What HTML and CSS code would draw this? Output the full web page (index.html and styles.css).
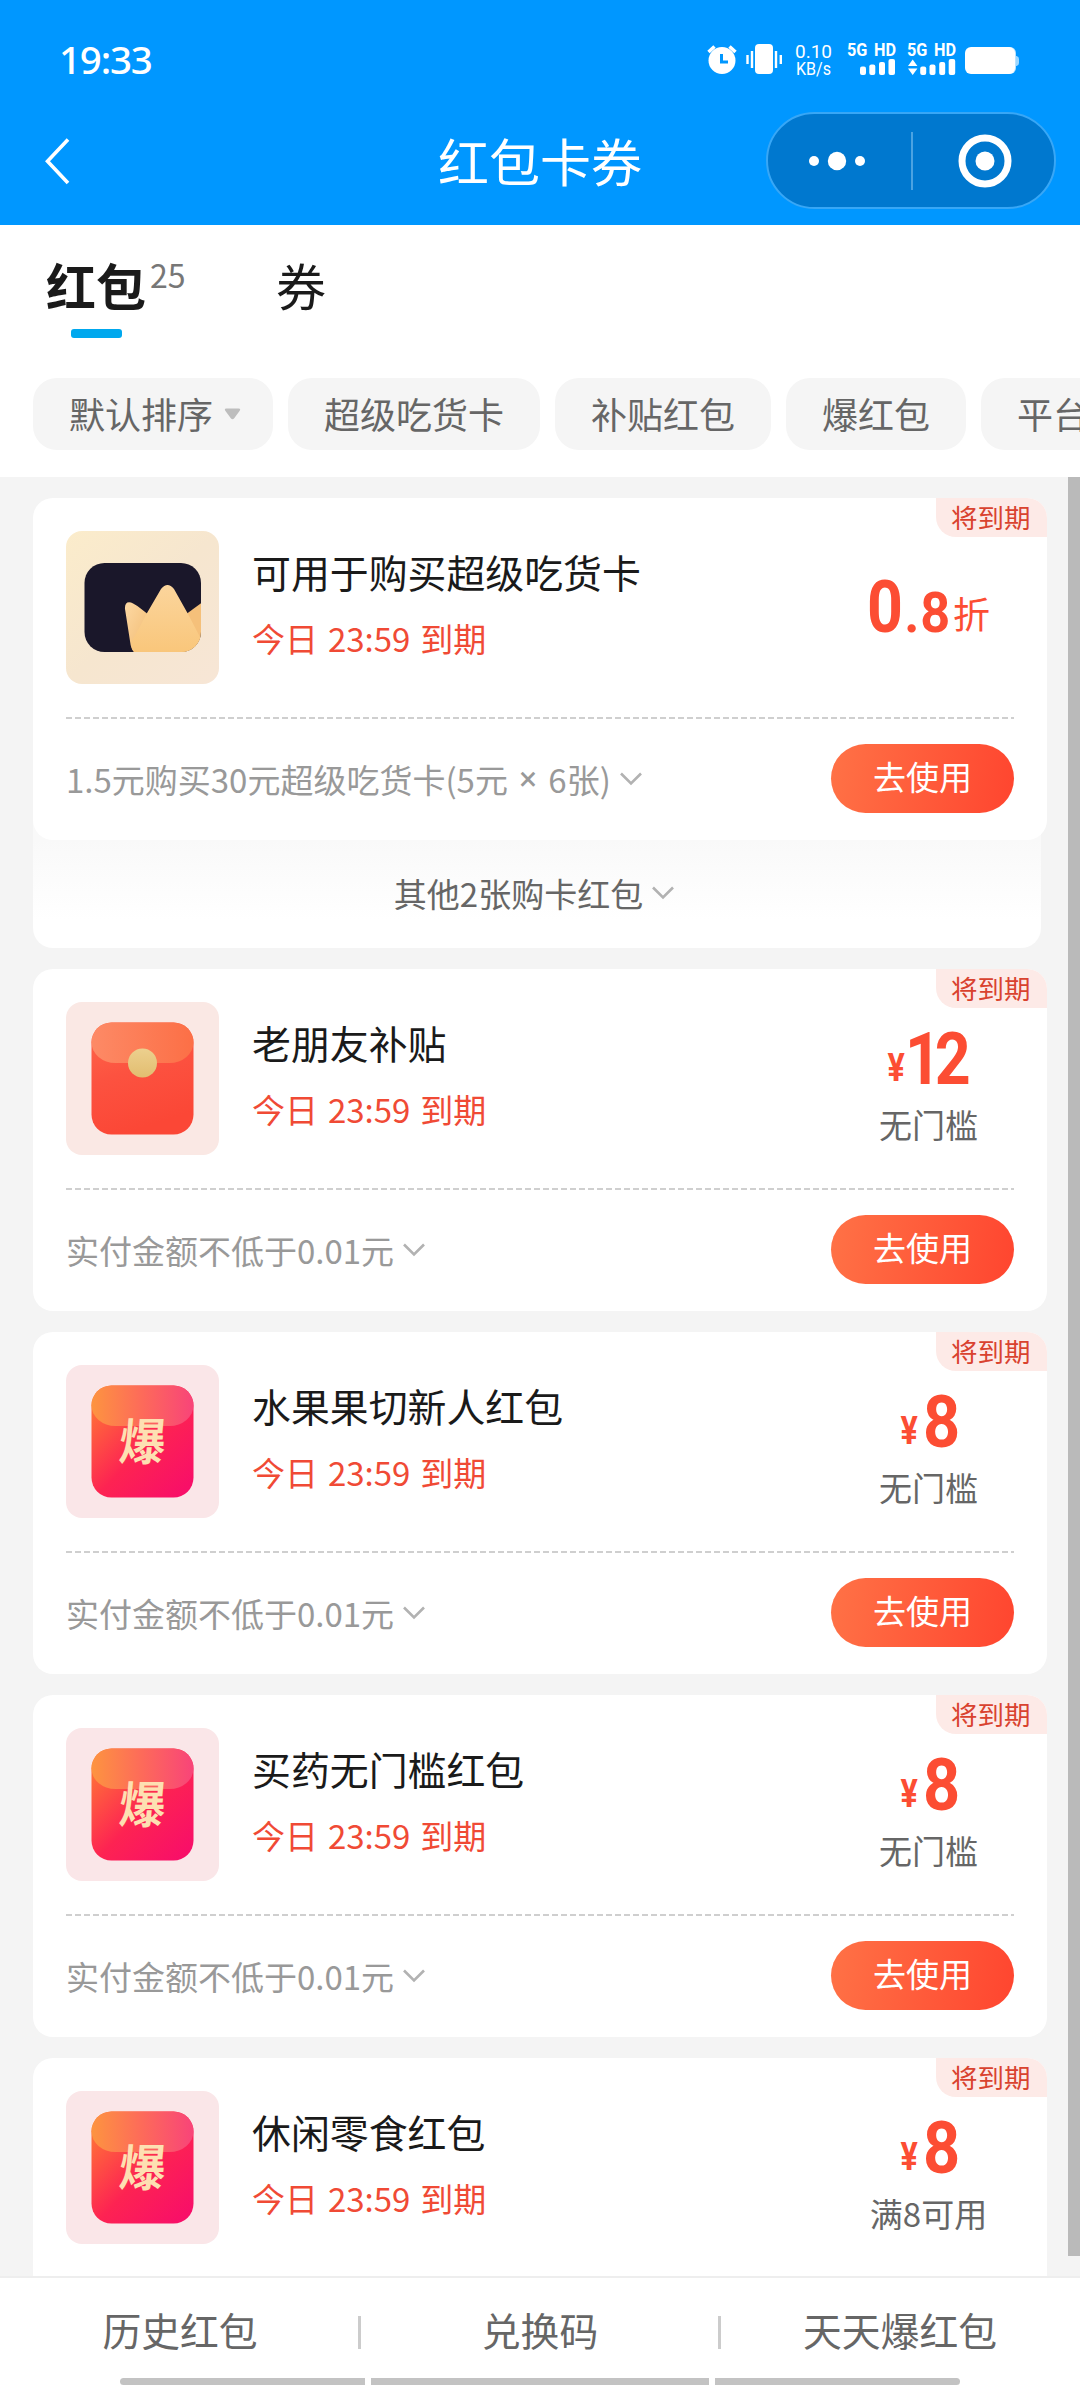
FILE: index.html
```html
<!DOCTYPE html>
<html lang="zh-CN">
<head>
<meta charset="utf-8">
<title>红包卡券</title>
<link rel="stylesheet" href="styles.css">
</head>
<body>
<svg class="defs" width="0" height="0" aria-hidden="true">
  <defs>
    <linearGradient id="cream" x1="0" y1="0" x2="1" y2="1"><stop offset="0" stop-color="#fbeccb"/><stop offset=".5" stop-color="#f6e6cf"/><stop offset="1" stop-color="#f7e6d6"/></linearGradient>
    <linearGradient id="gold" x1="0" y1="0" x2="0" y2="1"><stop offset="0" stop-color="#fbd59c"/><stop offset="1" stop-color="#f9c67a"/></linearGradient>
    <linearGradient id="goldSide" x1="0" y1="0" x2="1" y2="1"><stop offset="0" stop-color="#fdd9a4"/><stop offset="1" stop-color="#f0b66a"/></linearGradient>
    <linearGradient id="red" x1="0" y1="0" x2=".3" y2="1"><stop offset="0" stop-color="#ff6a4a"/><stop offset=".5" stop-color="#fc5240"/><stop offset="1" stop-color="#fb4736"/></linearGradient>
    <linearGradient id="flap" x1="0" y1="0" x2="1" y2="0"><stop offset="0" stop-color="#fd8a66"/><stop offset="1" stop-color="#fc6f46"/></linearGradient>
    <linearGradient id="coin" x1="0" y1="0" x2="0" y2="1"><stop offset="0" stop-color="#ecd08e"/><stop offset="1" stop-color="#e2bd70"/></linearGradient>
    <linearGradient id="hot" x1="0" y1="0.1" x2=".85" y2="1"><stop offset="0" stop-color="#ff7a35"/><stop offset=".55" stop-color="#fd2352"/><stop offset="1" stop-color="#f80f68"/></linearGradient>
    <linearGradient id="hotFlap" x1="0" y1="0" x2="1" y2="0"><stop offset="0" stop-color="#fd9440"/><stop offset=".5" stop-color="#fd6a5a"/><stop offset="1" stop-color="#f84479"/></linearGradient>
    <clipPath id="cardClip"><rect x="18.5" y="32" width="116.5" height="89" rx="20"/></clipPath>
    <symbol id="chevron" viewBox="0 0 24 14"><path d="M2 1.5 12 11.5 22 1.5" fill="none" stroke="#b2b2b2" stroke-width="2.6"/></symbol>
    <symbol id="burst" viewBox="0 0 153 153">
      <rect width="153" height="153" rx="16" fill="#fae6e8"/>
      <rect x="25.5" y="20.5" width="102" height="112" rx="20" fill="url(#hot)"/>
      <path d="M25.5 40.5a20 20 0 0 1 20-20h62a20 20 0 0 1 20 20a24 20.500 0 0 1-24 20.500h-54a24 20.500 0 0 1-24-20.500z" fill="url(#hotFlap)"/>
      <text transform="translate(58 95) skewX(-5) scale(1 1.06)" x="-6" y="0" textLength="46" lengthAdjust="spacingAndGlyphs" class="burst-char">爆</text>
    </symbol>
  </defs>
</svg>

<div class="screen">
  <header class="header">
    <div class="status">
      <span class="clock">19:33</span>
      <svg class="status-icons" width="325" height="44" viewBox="700 38 325 44" fill="#fff">
        <circle cx="723" cy="60.500" r="13.500"/>
        <path d="M709.500 52l6-5.500M736.500 52l-6-5.500" stroke="#fff" stroke-width="3.500" fill="none"/>
        <path d="M722.500 54v8h6.500" stroke="#0097ff" stroke-width="3" fill="none"/>
        <rect x="756" y="44" width="18" height="30" rx="4"/>
        <path d="M748.500 55v9M753 51v17M777 51v17M781.800 55v9" stroke="#fff" stroke-width="2.400"/>
        <g class="speed"><text x="796" y="58" textLength="37" lengthAdjust="spacingAndGlyphs">0.10</text><text x="797" y="74.500" textLength="35" lengthAdjust="spacingAndGlyphs">KB/s</text></g>
        <g class="net"><text x="848" y="56" textLength="49" lengthAdjust="spacingAndGlyphs">5G HD</text><text x="908" y="56" textLength="49" lengthAdjust="spacingAndGlyphs">5G HD</text></g>
        <g id="bars"><rect x="861" y="66.500" width="6" height="8.500" rx="2"/><rect x="870.300" y="64.500" width="6" height="10.500" rx="2"/><rect x="880" y="62" width="6" height="13" rx="2"/><rect x="889.500" y="59" width="6.500" height="16" rx="2"/></g>
        <use href="#bars" x="60.200"/>
        <path d="M909 66l4.700-6.500 4.700 6.500zM909 68.500h9.400l-4.700 6.500z"/>
        <path d="M1014 56h3.500a3 3 0 0 1 2.500 3v4a3 3 0 0 1-2.500 3h-3.500z" fill="#9dd7ff"/>
        <rect x="970" y="47" width="47" height="27" rx="6" fill="#b8e2ff"/>
        <rect x="966" y="47" width="50" height="27" rx="6"/>
      </svg>
    </div>
    <nav class="navbar">
      <svg class="back" width="26" height="50" viewBox="0 0 26 50"><path d="M24 3.500 3.500 25.200 24 47" fill="none" stroke="#fff" stroke-width="3.600"/></svg>
      <h1 class="page-title">红包卡券</h1>
      <div class="capsule">
        <svg width="56" height="20" viewBox="0 0 56 20" fill="#fff"><circle cx="5" cy="10" r="5"/><circle cx="28" cy="10" r="9.200"/><circle cx="51" cy="10" r="5"/></svg>
        <i class="capsule-line"></i>
        <svg width="54" height="54" viewBox="0 0 54 54"><circle cx="27" cy="27" r="23" fill="none" stroke="#fff" stroke-width="7"/><circle cx="27" cy="27" r="9.500" fill="#fff"/></svg>
      </div>
    </nav>
  </header>

  <section class="filters">
    <div class="tabs">
      <div class="tab tab-active"><span class="tab-name">红包</span><span class="tab-count">25</span></div>
      <div class="tab"><span class="tab-name">券</span></div>
    </div>
    <div class="chips">
      <span class="chip">默认排序<svg class="caret" width="17" height="12" viewBox="0 0 17 12"><path d="M2.500 0.500h12q2.600 0 1.200 2.200l-5.500 7.600q-1.700 1.900-3.400 0l-5.500-7.600q-1.400-2.200 1.200-2.200z" fill="#bdbdbd"/></svg></span>
      <span class="chip">超级吃货卡</span>
      <span class="chip">补贴红包</span>
      <span class="chip">爆红包</span>
      <span class="chip">平台</span>
    </div>
  </section>

  <main class="list">
    <i class="scrollbar"></i>
    <div class="stack">
      <article class="card">
        <span class="tag">将到期</span>
        <div class="card-main">
          <svg class="thumb" viewBox="0 0 153 153">
            <rect width="153" height="153" rx="16" fill="url(#cream)"/>
            <g clip-path="url(#cardClip)">
              <rect x="18" y="32" width="118" height="90" fill="#1a172a"/>
              <path d="M69 122Q65 119 64 110L59 78Q58.500 70 65 71.500Q68 72 81 82.500L88 122z" fill="url(#goldSide)"/>
              <path d="M121 82.500L136 71.500V122H110z" fill="#f5c07a"/>
              <path d="M70 122Q64 119 66 110Q75 94 81 82L95 58Q101.500 50 108 58L122 83L136 110V122z" fill="url(#gold)"/>
            </g>
          </svg>
          <div class="info"><h2 class="name">可用于购买超级吃货卡</h2><p class="date">今日 23:59 到期</p></div>
          <div class="value value-discount"><div class="amount"><b class="big">0</b><b class="mid">.8</b><span class="unit">折</span></div></div>
        </div>
        <div class="card-foot"><span class="rule">1.5元购买30元超级吃货卡(5元&nbsp;<span class="times">×</span>&nbsp;6张)<svg class="chevron"><use href="#chevron"/></svg></span><span class="use-btn">去使用</span></div>
      </article>
      <div class="more">其他2张购卡红包<svg class="chevron"><use href="#chevron"/></svg></div>
    </div>

    <article class="card">
      <span class="tag">将到期</span>
      <div class="card-main">
        <svg class="thumb" viewBox="0 0 153 153">
          <rect width="153" height="153" rx="16" fill="#fae8e4"/>
          <rect x="25.500" y="20.500" width="102" height="112" rx="20" fill="url(#red)"/>
          <path d="M25.500 40.500a20 20 0 0 1 20-20h62a20 20 0 0 1 20 20a24 20.500 0 0 1-24 20.500h-54a24 20.500 0 0 1-24-20.500z" fill="url(#flap)"/>
          <circle cx="76.500" cy="61" r="14.500" fill="url(#coin)"/>
        </svg>
        <div class="info"><h2 class="name">老朋友补贴</h2><p class="date">今日 23:59 到期</p></div>
        <div class="value"><div class="amount"><b class="yen">¥</b><b class="big">12</b></div><p class="limit">无门槛</p></div>
      </div>
      <div class="card-foot"><span class="rule">实付金额不低于0.01元<svg class="chevron"><use href="#chevron"/></svg></span><span class="use-btn">去使用</span></div>
    </article>

    <article class="card">
      <span class="tag">将到期</span>
      <div class="card-main">
        <svg class="thumb"><use href="#burst"/></svg>
        <div class="info"><h2 class="name">水果果切新人红包</h2><p class="date">今日 23:59 到期</p></div>
        <div class="value"><div class="amount amount-single"><b class="yen">¥</b><b class="big">8</b></div><p class="limit">无门槛</p></div>
      </div>
      <div class="card-foot"><span class="rule">实付金额不低于0.01元<svg class="chevron"><use href="#chevron"/></svg></span><span class="use-btn">去使用</span></div>
    </article>

    <article class="card">
      <span class="tag">将到期</span>
      <div class="card-main">
        <svg class="thumb"><use href="#burst"/></svg>
        <div class="info"><h2 class="name">买药无门槛红包</h2><p class="date">今日 23:59 到期</p></div>
        <div class="value"><div class="amount amount-single"><b class="yen">¥</b><b class="big">8</b></div><p class="limit">无门槛</p></div>
      </div>
      <div class="card-foot"><span class="rule">实付金额不低于0.01元<svg class="chevron"><use href="#chevron"/></svg></span><span class="use-btn">去使用</span></div>
    </article>

    <article class="card card-cut">
      <span class="tag">将到期</span>
      <div class="card-main">
        <svg class="thumb"><use href="#burst"/></svg>
        <div class="info"><h2 class="name">休闲零食红包</h2><p class="date">今日 23:59 到期</p></div>
        <div class="value"><div class="amount amount-single"><b class="yen">¥</b><b class="big">8</b></div><p class="limit">满8可用</p></div>
      </div>
    </article>
  </main>

  <footer class="footer">
    <div class="links"><a class="link">历史红包</a><a class="link">兑换码</a><a class="link">天天爆红包</a></div>
    <div class="home"><i class="home-side"></i><i class="home-mid"></i><i class="home-side"></i></div>
  </footer>
</div>
</body>
</html>
```

FILE: styles.css
```css
* { box-sizing: border-box; margin: 0; padding: 0; }
body { width: 1080px; height: 2388px; overflow: hidden; background: #fff; font-family: "Noto Sans CJK SC", sans-serif; font-weight: 400; }
svg { display: block; flex: none; }
i { display: block; }
.defs { position: absolute; }
.screen { width: 1080px; height: 2388px; display: flex; flex-direction: column; overflow: hidden; }

.header { height: 225px; flex: none; background: #0097ff; color: #fff; }
.status { height: 112px; padding: 38px 56px 0 59px; display: flex; justify-content: space-between; }
.clock { font: 500 38.500px/42px "Noto Sans", sans-serif; letter-spacing: -1.200px; }
.speed { font: 400 18px Roboto, sans-serif; }
.net { font: 700 19px Roboto, sans-serif; word-spacing: 3px; }
.navbar { height: 97px; display: grid; grid-template-columns: 1fr auto 1fr; align-items: center; padding: 0 24px 0 44px; }
.page-title { font-size: 51px; font-weight: 400; line-height: 60px; margin: -2px 0 0 -20px; }
.capsule { justify-self: end; width: 290px; height: 97px; border: 2px solid #38a7f6; border-radius: 49px; background: #0078cf; display: flex; align-items: center; justify-content: space-between; padding: 0 42px 0 41px; }
.capsule-line { width: 2px; height: 58px; background: #4ba3e2; }

.filters { height: 252px; flex: none; }
.tabs { height: 153px; padding: 28px 0 0 46px; display: flex; }
.tab { height: 86px; display: flex; color: #1a1a1a; }
.tab-name { font-size: 50px; line-height: 62px; }
.tab-active { width: 230px; }
.tab-active .tab-name { font-weight: 700; position: relative; }
.tab-active .tab-name::after { content: ""; position: absolute; left: 25px; top: 76px; width: 51px; height: 9px; border-radius: 3px; background: #00a8ee; }
.tab-count { font-size: 32px; line-height: 43px; margin-left: 4px; color: #777; }
.chips { display: flex; gap: 15px; padding-left: 33px; overflow: hidden; }
.chip { flex: none; height: 72px; padding: 0 36px 2px; display: flex; align-items: center; font-size: 36px; line-height: 60px; color: #666; background: #f5f5f5; border-radius: 24px; }
.caret { margin: 2px -4px 0 11px; }

.list { position: relative; height: 1799px; flex: none; overflow: hidden; background: #f4f4f4; padding: 21px 33px 0; display: flex; flex-direction: column; gap: 21px; }
.scrollbar { position: absolute; right: 0; top: 0; width: 12px; height: 1779px; background: #bababa; }
.stack { height: 450px; flex: none; }
.card { position: relative; width: 1014px; height: 342px; flex: none; background: #fff; border-radius: 20px; padding: 33px 33px 0; }
.tag { position: absolute; top: 0; right: 0; width: 111px; height: 39px; padding: 0 15px; font-size: 26.500px; line-height: 37px; white-space: nowrap; color: #d9422f; background: #fdeae7; border-radius: 0 20px 0 20px; }
.card-main { height: 188px; display: flex; border-bottom: 2px solid transparent; background: repeating-linear-gradient(90deg, #cfcfcf 0 6px, transparent 6px 9px) 0 100% / 100% 2px no-repeat border-box; }
.card-cut .card-main { background: none; }
.thumb { width: 153px; height: 153px; }
.burst-char { font-size: 47px; font-weight: 700; fill: #fde0b2; }
.info { flex: 1; padding: 13px 0 0 33px; }
.name { font-size: 38.900px; font-weight: 400; line-height: 54px; color: #1a1a1a; }
.date { margin-top: 17px; font-size: 33px; line-height: 46px; word-spacing: 2.500px; color: #f04a35; }
.value { width: 171px; padding-top: 24px; text-align: center; }
.amount { display: flex; justify-content: center; align-items: baseline; height: 68px; color: #fc4d33; line-height: 68px; font-family: Roboto, sans-serif; }
.big { font-size: 72px; letter-spacing: -7px; transform: scaleX(.87); transform-origin: 0 50%; margin-right: -2px; }
.yen { font-size: 38px; transform: scaleX(.85) translateY(-3px); margin-right: -1px; }
.amount-single { padding-right: 3px; }
.amount-single .yen { margin-right: 4px; }
.amount-single .big { transform: scaleX(.9); }
.limit { margin-top: 7px; font-size: 33px; line-height: 46px; color: #666; }
.value-discount { padding-top: 43px; }
.value-discount .big { letter-spacing: 0; margin-right: -5px; }
.mid { font-size: 55px; letter-spacing: 1px; transform: scaleX(.95); }
.unit { font-family: "Noto Sans CJK SC", sans-serif; font-size: 37px; line-height: 1; transform: translateY(-3px); }
.card-foot { height: 121px; display: flex; align-items: center; justify-content: space-between; padding-bottom: 2px; }
.rule { display: flex; align-items: center; font-size: 33px; line-height: 46px; color: #999; }
.times { font-family: Roboto, sans-serif; margin: 0 4px; }
.chevron { width: 24px; height: 14px; margin-left: 8px; }
.use-btn { width: 183px; height: 69px; border-radius: 35px; background: linear-gradient(100deg, #ff7246, #ff452f); color: #fff; font-size: 33px; line-height: 65px; text-align: center; }
.more { width: 1008px; height: 128px; margin-top: -20px; padding: 17px 5px 0 0; border-radius: 0 0 20px 20px; background: linear-gradient(#f9f9f9 20px, #fff 100px); display: flex; align-items: center; justify-content: center; font-size: 33px; color: #666; }

.footer { flex: 1; border-top: 2px solid #eee; background: #fff; }
.links { height: 100px; display: flex; }
.link { flex: 1; position: relative; padding-top: 23px; font-size: 38.800px; line-height: 56px; text-align: center; color: #666; }
.link + .link::before { content: ""; position: absolute; left: -2px; top: 38px; width: 3px; height: 33px; background: #ccc; }
.home { display: flex; gap: 6px; justify-content: center; }
.home-side, .home-mid { height: 7px; background: #c3c3c3; }
.home-side { width: 245px; }
.home-mid { width: 338px; }
.home-side:first-child { border-radius: 4px 0 0 4px; }
.home-side:last-child { border-radius: 0 4px 4px 0; }
```
